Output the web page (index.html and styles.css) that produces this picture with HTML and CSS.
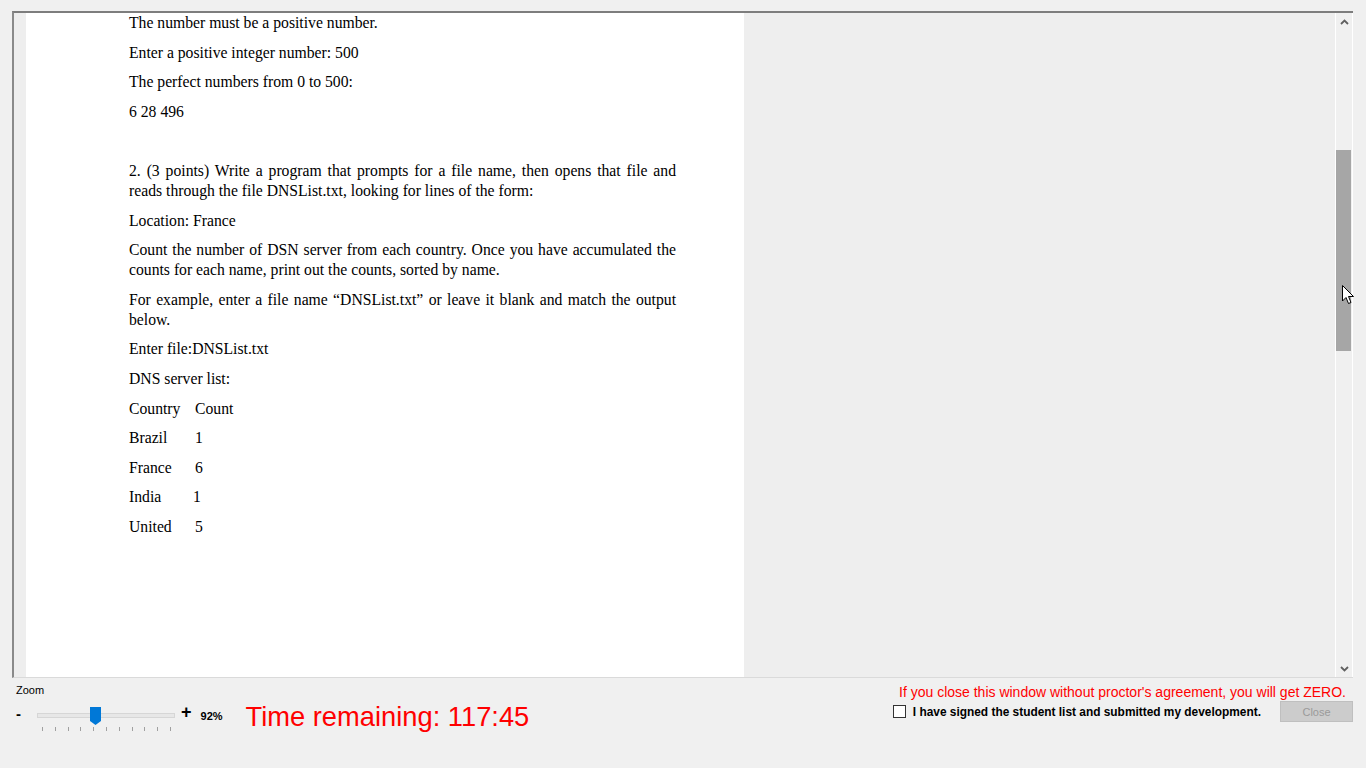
FILE: index.html
```html
<!DOCTYPE html>
<html>
<head>
<meta charset="utf-8">
<link rel="stylesheet" href="styles.css">
</head>
<body>
<div class="viewer">
  <div class="doc">
    <div class="page">
      <p>The number must be a positive number.</p>
      <p>Enter a positive integer number: 500</p>
      <p>The perfect numbers from 0 to 500:</p>
      <p>6 28 496</p>
      <p>&nbsp;</p>
      <p class="just">2. (3 points) Write a program that prompts for a file name, then opens that file and reads through the file DNSList.txt, looking for lines of the form:</p>
      <p>Location: France</p>
      <p class="just">Count the number of DSN server from each country. Once you have accumulated the counts for each name, print out the counts, sorted by name.</p>
      <p class="just">For example, enter a file name “DNSList.txt” or leave it blank and match the output below.</p>
      <p>Enter file:DNSList.txt</p>
      <p>DNS server list:</p>
      <p><span class="name">Country</span><span class="cnt">Count</span></p>
      <p><span class="name">Brazil</span><span class="cnt">1</span></p>
      <p><span class="name">France</span><span class="cnt">6</span></p>
      <p><span class="name short">India</span><span class="cnt">1</span></p>
      <p><span class="name">United</span><span class="cnt">5</span></p>
    </div>
  </div>
  <div class="scrollbar">
    <div class="arrow">
      <svg width="9" height="6" viewBox="0 0 9 6"><path d="M1 5 L4.5 1.5 L8 5" fill="none" stroke="#606060" stroke-width="1.8"/></svg>
    </div>
    <div class="track">
      <div class="thumb"></div>
    </div>
    <div class="arrow">
      <svg width="9" height="6" viewBox="0 0 9 6"><path d="M1 1 L4.5 4.5 L8 1" fill="none" stroke="#606060" stroke-width="1.8"/></svg>
    </div>
  </div>
  <svg class="cursor" width="13" height="20" viewBox="0 0 13 20"><path d="M0.5 0.5 L0.5 16 L4 12.5 L6.5 18.5 L9 17.5 L6.5 11.5 L11.5 11.5 Z" fill="#fff" stroke="#000" stroke-width="1"/></svg>
</div>
<div class="bottom">
  <div class="zoom">
    <div class="zoom-label">Zoom</div>
    <div class="zoom-row">
      <span class="minus">-</span>
      <div class="slider">
        <div class="strack"></div>
        <div class="sthumb"></div>
        <div class="ticks">
          <i></i><i></i><i></i><i></i><i></i><i></i><i></i><i></i><i></i><i></i><i></i>
        </div>
      </div>
      <span class="plus">+</span>
      <span class="pct">92%</span>
      <span class="time">Time remaining: 117:45</span>
    </div>
  </div>
  <div class="right">
    <div class="warn">If you close this window without proctor's agreement, you will get ZERO.</div>
    <div class="confirm">
      <span class="box"></span>
      <span class="label">I have signed the student list and submitted my development.</span>
      <button class="close">Close</button>
    </div>
  </div>
</div>
</body>
</html>
```
FILE: styles.css
```css
html, body {
  margin: 0;
  padding: 0;
  background: #f0f0f0;
  width: 1366px;
  height: 768px;
  overflow: hidden;
  font-family: "Liberation Sans", Arial, sans-serif;
}

.viewer {
  position: relative;
  margin: 11px 13px 0 12px;
  height: 664px;
  display: flex;
  border-top: 2px solid #7d7d7d;
  border-left: 2px solid #8a8a8a;
  border-bottom: 1px solid #dadada;
  box-sizing: content-box;
}

.doc {
  flex: 1;
  background: #eeeeee;
  padding-left: 12px;
  display: flex;
  overflow: hidden;
}

.page {
  width: 718px;
  background: #ffffff;
  box-sizing: border-box;
  padding: 0 68px 0 103px;
  font-family: "Liberation Serif", "Times New Roman", serif;
  font-size: 15.7px;
  color: #000;
}

.page p {
  margin: 0 0 9.6px;
  line-height: 20px;
}

.page p.just {
  text-align: justify;
}

.name {
  display: inline-block;
  width: 66px;
}

.name.short {
  width: 64px;
}

.scrollbar {
  width: 16px;
  border-left: 1px solid #ffffff;
  border-right: 1px solid #ffffff;
  background: #f0f0f0;
  display: flex;
  flex-direction: column;
}

.arrow {
  height: 17px;
  display: flex;
  align-items: center;
  justify-content: center;
}

.track {
  flex: 1;
  padding-top: 120px;
}

.thumb {
  width: 15px;
  height: 201px;
  background: #a6a6a6;
}

.cursor {
  position: absolute;
  left: 1328px;
  top: 272px;
}

.bottom {
  display: flex;
  justify-content: space-between;
  padding: 5px 14px 0 15px;
}

.zoom-label {
  font-size: 11px;
  color: #000;
  margin-left: 1px;
  line-height: 14px;
}

.zoom-row {
  display: flex;
  align-items: flex-start;
  margin-top: 7px;
}

.minus {
  font-size: 15px;
  font-weight: bold;
  width: 21px;
  line-height: 20px;
  padding-left: 1px;
}

.slider {
  position: relative;
  width: 138px;
  height: 30px;
}

.strack {
  margin-top: 9px;
  height: 3px;
  background: #e7e7e7;
  border: 1px solid #d6d6d6;
}

.sthumb {
  position: absolute;
  left: 53px;
  top: 3px;
  width: 11px;
  height: 18px;
  background: #0078d7;
  clip-path: polygon(0 0, 100% 0, 100% 78%, 50% 100%, 0 78%);
}

.ticks {
  display: flex;
  justify-content: space-between;
  padding: 0 4px 0 5px;
  margin-top: 9px;
}

.ticks i {
  display: block;
  width: 1px;
  height: 4px;
  background: #a0a0a0;
}

.plus {
  font-size: 18px;
  font-weight: bold;
  margin-left: 6px;
  line-height: 18px;
  margin-top: -1px;
}

.pct {
  font-size: 11px;
  font-weight: bold;
  margin-left: 9px;
  line-height: 20px;
  margin-top: 2px;
}

.time {
  font-size: 27.3px;
  color: #ff0000;
  margin-left: 23px;
  line-height: 30px;
  margin-top: -2px;
}

.right {
  display: flex;
  flex-direction: column;
  align-items: flex-end;
}

.warn {
  color: #ff0000;
  font-size: 14px;
  line-height: 16px;
  margin-top: 1px;
  margin-right: 6px;
}

.confirm {
  display: flex;
  align-items: center;
  margin-top: 1px;
}

.box {
  width: 11px;
  height: 11px;
  border: 1px solid #333;
  background: #fff;
  margin-right: 7px;
}

.label {
  font-size: 11.9px;
  font-weight: bold;
  color: #000;
  margin-right: 19px;
}

.close {
  width: 73px;
  height: 21px;
  background: #cccccc;
  border: 1px solid #bfbfbf;
  color: #9a9a9a;
  font-family: "Liberation Sans", Arial, sans-serif;
  font-size: 11px;
  padding: 0;
  margin-right: -1px;
}
```
